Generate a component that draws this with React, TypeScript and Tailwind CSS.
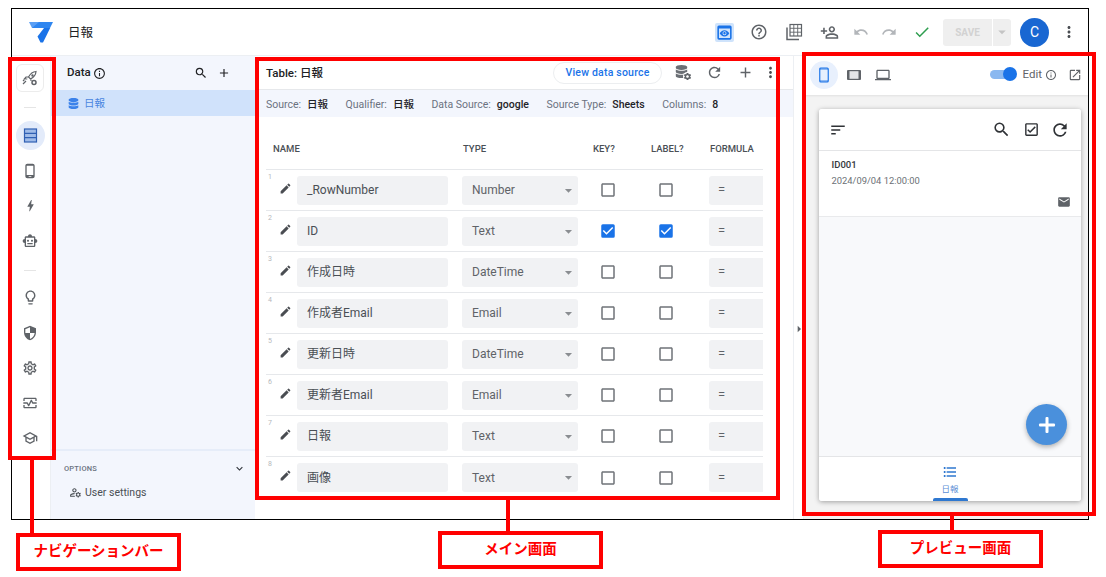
import React from "react";
import { MdOutlinePhoneAndroid, MdBolt, MdOutlineSmartToy, MdOutlineLightbulb, MdOutlineSecurity, MdOutlineSettings, MdOutlineMonitorHeart, MdOutlineSchool, MdOutlineHelpOutline, MdPreview, MdOutlinePersonAddAlt, MdUndo, MdRedo, MdCheck, MdArrowDropDown, MdMoreVert, MdInfoOutline, MdSearch, MdAdd, MdOutlineManageAccounts, MdEdit, MdCheckBoxOutlineBlank, MdCheckBox, MdOutlineLaptop, MdOutlineOpenInNew, MdSort, MdOutlineCheckBox, MdRefresh, MdEmail, MdFormatListBulleted, MdExpandMore, MdArrowRight, MdSettings } from "react-icons/md";
import { FaDatabase } from "react-icons/fa";

const rows = [
  ["_RowNumber", "Number", false, false],
  ["ID", "Text", true, true],
  ["作成日時", "DateTime", false, false],
  ["作成者Email", "Email", false, false],
  ["更新日時", "DateTime", false, false],
  ["更新者Email", "Email", false, false],
  ["日報", "Text", false, false],
  ["画像", "Text", false, false],
] as const;

function Check({ on }: { on: boolean }) {
  return on ? <MdCheckBox className="text-[#1a73e8]" size={18} /> : <MdCheckBoxOutlineBlank className="text-[#6f7378]" size={18} />;
}

function Meta({ k, v }: { k: string; v: string }) {
  return (
    <span className="flex items-center gap-[6px]">
      <span className="text-[#6b7280]">{k}</span>
      <span className="font-medium text-[#1f2328]">{v}</span>
    </span>
  );
}

function NavIcon({ children, active }: { children: React.ReactNode; active?: boolean }) {
  return (
    <div className="flex h-[35px] items-center justify-center text-[#5f6368]">
      {active ? <div className="flex h-[29px] w-[29px] items-center justify-center rounded-full bg-[#e3ebfa] text-[#2f5fb3]">{children}</div> : children}
    </div>
  );
}

function RocketGear() {
  return (
    <svg width="16" height="16" viewBox="0 0 16 16" fill="none" stroke="#5f6368" strokeWidth="1.2">
      <path d="M14 1.500c-3.500.2-5.500 1.800-7.500 5.500l2 2c3.700-2 5.300-4 5.500-7.500z" />
      <path d="M6.500 7H4L2.500 8.800 5.300 9M9 9.500V11" />
      <path d="M1 14l3-3M1 11l1.500-1.500" />
      <circle cx="12" cy="12.500" r="2" strokeWidth="1.500" />
      <circle cx="10.500" cy="5.500" r=".6" fill="#5f6368" />
    </svg>
  );
}

function TableRows() {
  return (
    <svg width="15" height="15" viewBox="0 0 15 15">
      <rect x="1.500" y="1" width="12" height="13" fill="#9fbbe8" stroke="#2f5fb3" strokeWidth="1.200" />
      <path d="M1.500 5.300h12M1.500 9.700h12" stroke="#2f5fb3" strokeWidth="1.300" />
    </svg>
  );
}

function LibraryGrid() {
  return (
    <svg width="18" height="18" viewBox="0 0 18 18" fill="none" stroke="#5f6368" strokeWidth="1.200">
      <rect x="5" y="1.500" width="11.500" height="11.500" />
      <path d="M8.800 1.500v11.500M12.700 1.500v11.500M5 5.300h11.500M5 9.200h11.500" strokeWidth=".9" />
      <path d="M2 4.500v12h12" strokeWidth="1.500" />
    </svg>
  );
}

function Phone() {
  return (
    <svg width="16" height="16" viewBox="0 0 16 16">
      <rect x="3.800" y="1" width="8.400" height="14" rx="1" fill="#8db8f2" stroke="#1a73e8" strokeWidth="1.200" />
      <rect x="4.500" y="3" width="7" height="10" fill="#e8f0fd" />
    </svg>
  );
}

function Tablet() {
  return (
    <svg width="16" height="16" viewBox="0 0 16 16">
      <rect x="1" y="3" width="14" height="10" rx="1" fill="#5f6368" />
      <rect x="3.500" y="4.200" width="9" height="7.600" fill="#e4e5e7" />
    </svg>
  );
}

function Plus() {
  return (
    <svg width="18" height="18" viewBox="0 0 18 18" fill="#ffffff">
      <rect x="7.500" y="1" width="3" height="16" rx="1" />
      <rect x="1" y="7.500" width="16" height="3" rx="1" />
    </svg>
  );
}

export default function App() {
  return (
    <div className="relative h-[577px] w-[1106px] overflow-hidden bg-white pt-[8px] pl-[11px] font-['Roboto','Noto_Sans_CJK_JP',sans-serif] text-[#3c4043]">
      <div className="flex h-[512px] w-[1078px] flex-col overflow-hidden border border-black">
        {/* Header */}
        <header className="flex h-[47px] shrink-0 items-center border-b border-[#eceff3] pl-[17px] pr-[10px]">
          <svg width="24" height="21" viewBox="0 0 24 21" className="mr-[15px]">
            <path d="M0 0h12l3 6H3z" fill="#5a9ff5" />
            <path d="M10 0h14l-3 6H3z" fill="#2f86f0" />
            <path d="M15 6h6.200L14 20.500h-2.500L8.500 14.500z" fill="#1a73e8" />
          </svg>
          <span className="pt-[2px] text-[12.500px] text-[#202124]">日報</span>
          <div className="ml-auto flex items-center text-[#5f6368]">
            <MdPreview size={19} className="mr-[16px] rounded-[2px] bg-[#cfe3fb] text-[#1a73e8]" />
            <MdOutlineHelpOutline size={18} className="mr-[17px]" />
            <LibraryGrid />
            <MdOutlinePersonAddAlt size={19} className="ml-[17px] mr-[14px] -scale-x-100" />
            <MdUndo size={16} className="mr-[12px] text-[#b3b6ba]" />
            <MdRedo size={16} className="mr-[16px] text-[#b3b6ba]" />
            <MdCheck size={18} className="mr-[12px] text-[#2e9e4f]" />
            <div className="mr-[9px] flex h-[27px] w-[68px] items-center rounded-[3px] bg-[#efefef] text-[10px] font-bold text-[#d2d2d2]">
              <span className="flex h-full w-[50px] items-center justify-center border-r border-white">SAVE</span>
              <MdArrowDropDown size={18} className="text-[#c4c4c4]" />
            </div>
            <div className="mr-[11px] flex h-[29px] w-[29px] items-center justify-center rounded-full bg-[#1967d2] text-[14px] text-white">C</div>
            <MdMoreVert size={18} className="text-[#4a4d52]" />
          </div>
        </header>

        <div className="flex min-h-0 flex-1">
          {/* Nav */}
          <nav className="flex w-[39px] shrink-0 flex-col items-center border-r border-[#eceff3] pr-[2px] pt-[8px]">
            <div className="flex h-[28px] w-[28px] items-center justify-center rounded-[6px] border border-[#ececec]"><RocketGear /></div>
            <div className="mt-[15px] mb-[10px] h-px w-[12px] bg-[#e5e5e5]" />
            <NavIcon active><TableRows /></NavIcon>
            <NavIcon><MdOutlinePhoneAndroid size={16} /></NavIcon>
            <NavIcon><MdBolt size={15} /></NavIcon>
            <NavIcon><MdOutlineSmartToy size={16} /></NavIcon>
            <div className="mt-[12px] mb-[9px] h-px w-[12px] bg-[#e5e5e5]" />
            <NavIcon><MdOutlineLightbulb size={17} /></NavIcon>
            <NavIcon><MdOutlineSecurity size={16} /></NavIcon>
            <NavIcon><MdOutlineSettings size={16} /></NavIcon>
            <NavIcon><MdOutlineMonitorHeart size={16} /></NavIcon>
            <NavIcon><MdOutlineSchool size={16} /></NavIcon>
          </nav>

          {/* Data panel */}
          <aside className="flex w-[204px] shrink-0 flex-col bg-[#f3f6fd]">
            <div className="flex h-[34px] items-center pl-[16px] pr-[24px] text-[11.500px] font-medium text-[#202124]">
              <span>Data</span>
              <MdInfoOutline size={13} className="ml-[2px]" />
              <MdSearch size={14} className="ml-auto mr-[9px]" />
              <MdAdd size={14} />
            </div>
            <div className="flex h-[26px] items-center gap-[5px] bg-[#d0e2fb] pl-[17px] pt-[1px] text-[10.500px] text-[#4a86e0]">
              <FaDatabase size={11} className="text-[#3b82ea]" />
              <span>日報</span>
            </div>
            <div className="mt-auto h-[70px] border-t-2 border-[#e6edf9] pl-[13px] pr-[9px] pt-[11px]">
              <div className="flex items-center justify-between text-[7.500px] font-medium tracking-[0.2px] text-[#6b7280]">
                <span>OPTIONS</span>
                <MdExpandMore size={13} className="text-[#30343a]" />
              </div>
              <div className="mt-[10px] flex items-center gap-[3px] pl-[5px] text-[10.500px] text-[#4a4f55]">
                <MdOutlineManageAccounts size={13} />
                <span>User settings</span>
              </div>
            </div>
          </aside>

          {/* Main */}
          <main className="flex w-[539px] shrink-0 flex-col border-r border-[#eceff3]">
            <div className="flex h-[34px] shrink-0 items-center border-b border-[#e6e8eb] pl-[11px] pr-[14px]">
              <span className="pt-[3px] text-[11.500px] font-medium text-[#202124]">Table: 日報</span>
              <div className="ml-auto flex items-center text-[#5f6368]">
                <span className="mr-[13px] flex h-[22px] w-[109px] items-center justify-center rounded-full border border-[#eceef0] text-[10.500px] font-medium tracking-[0.2px] text-[#1a73e8]">View data source</span>
                <div className="relative mr-[16px] h-[15px] w-[15px]">
                  <FaDatabase size={13} className="text-[#6b6f75]" />
                  <MdSettings size={9} className="absolute -bottom-[1px] -right-[2px] rounded-full bg-white text-[#5f6368]" />
                </div>
                <MdRefresh size={17} className="mr-[14px]" />
                <MdAdd size={17} className="mr-[8px]" />
                <MdMoreVert size={17} className="text-[#4a4d52]" />
              </div>
            </div>
            <div className="flex h-[27px] shrink-0 items-center gap-[17.500px] bg-[#f3f6fd] pl-[11px] pt-[3px] text-[10.500px]">
              <Meta k="Source:" v="日報" />
              <Meta k="Qualifier:" v="日報" />
              <Meta k="Data Source:" v="google" />
              <Meta k="Source Type:" v="Sheets" />
              <Meta k="Columns:" v="8" />
            </div>
            <div className="ml-[11px] w-[497px] overflow-hidden">
              <div className="flex h-[53px] items-center border-b border-[#e6e8eb] pt-[12px] text-[9.500px] font-medium text-[#4a4f55]">
                <span className="ml-[7px] w-[190px]">NAME</span>
                <span className="w-[130px]">TYPE</span>
                <span className="w-[58px]">KEY?</span>
                <span className="w-[59px]">LABEL?</span>
                <span>FORMULA</span>
              </div>
              {rows.map(([name, type, key, label], i) => (
                <div key={name} className="relative flex h-[41px] items-center border-b border-[#e6e8eb] last:border-b-0">
                  <span className="absolute left-[2px] top-[2px] text-[7px] text-[#b5b8bc]">{i + 1}</span>
                  <MdEdit size={13} className="ml-[13px] mb-[4px] text-[#4a4d52]" />
                  <div className="ml-[5px] flex h-[29px] w-[151px] items-center rounded-[3px] bg-[#f1f2f4] pl-[10px] text-[12px] text-[#4a4f55]">{name}</div>
                  <div className="ml-[14px] flex h-[29px] w-[116px] items-center justify-between rounded-[3px] bg-[#f1f2f4] pl-[10px] pr-[1px] text-[12px] text-[#5f6368]">
                    {type}
                    <MdArrowDropDown size={17} className="text-[#8a8d91]" />
                  </div>
                  <div className="ml-[21px] flex w-[18px] justify-center"><Check on={key} /></div>
                  <div className="ml-[40px] flex w-[18px] justify-center"><Check on={label} /></div>
                  <div className="ml-[34px] flex h-[29px] w-[54px] shrink-0 items-center rounded-l-[3px] bg-[#f1f2f4] pl-[9px] text-[13px] text-[#5f6368]">=</div>
                </div>
              ))}
            </div>
          </main>

          {/* Splitter */}
          <div className="flex w-[10px] shrink-0 items-center justify-center border-r border-[#eceff3] pt-[82px] text-[#5f6368]">
            <MdArrowRight size={16} className="shrink-0" />
          </div>

          {/* Preview */}
          <section className="flex min-w-0 flex-1 flex-col bg-[#f3f3f3]">
            <div className="flex h-[39px] shrink-0 items-center bg-white pb-[2px] pl-[6px] pr-[6px] text-[#5f6368] shadow-[0_1px_2px_rgba(0,0,0,0.08)]">
              <div className="flex h-[28px] w-[28px] items-center justify-center rounded-full bg-[#e8f0fd]"><Phone /></div>
              <div className="ml-[8px]"><Tablet /></div>
              <MdOutlineLaptop size={16} className="ml-[13px]" />
              <div className="relative ml-auto mr-[3px] h-[9px] w-[24px] rounded-full bg-[#8ab8f0]">
                <div className="absolute -top-[3px] -right-[3px] h-[14px] w-[14px] rounded-full bg-[#1a73e8]" />
              </div>
              <span className="ml-[6px] text-[11.500px]">Edit</span>
              <MdInfoOutline size={12} className="ml-[3px]" />
              <MdOutlineOpenInNew size={14} className="ml-[11px]" />
            </div>
            <div className="relative mb-[18px] ml-[15px] mr-[7px] mt-[14px] flex flex-1 flex-col overflow-hidden rounded-[3px] bg-[#f8f9fb] shadow-[0_1px_5px_rgba(0,0,0,0.35)]">
              <div className="flex h-[42px] shrink-0 items-center border-b border-[#e4e5e7] bg-white pl-[10px] pr-[11px] text-[#2f3236]">
                <MdSort size={18} />
                <MdSearch size={19} className="ml-auto" />
                <MdOutlineCheckBox size={17} className="ml-[12px]" />
                <MdRefresh size={20} className="ml-[10px]" />
              </div>
              <div className="relative h-[66px] shrink-0 border-b border-[#e9eaec] bg-white pl-[12.500px] pt-[7px]">
                <div className="text-[9.500px] font-medium text-[#33373c]">ID001</div>
                <div className="mt-[2px] text-[9.400px] text-[#6b6f75]">2024/09/04 12:00:00</div>
                <MdEmail size={14} className="absolute bottom-[7px] right-[10px] text-[#5f6368]" />
              </div>
              <div className="mt-auto flex h-[45px] shrink-0 flex-col items-center border-t border-[#e4e5e7] bg-white pt-[7px] text-[#2f78d0]">
                <MdFormatListBulleted size={16} />
                <span className="mt-[4px] text-[8.500px] leading-[10px] text-[#5c8fd6]">日報</span>
                <div className="mt-auto h-[3px] w-[35px] rounded-t-[2px] bg-[#2f78d0]" />
              </div>
              <div className="absolute bottom-[56px] right-[14px] flex h-[41px] w-[41px] items-center justify-center rounded-full bg-[#4a90dc] shadow-[0_2px_5px_rgba(0,0,0,0.3)]">
                <Plus />
              </div>
            </div>
          </section>
        </div>
      </div>

      {/* Annotations */}
      <div className="absolute left-[8px] top-[57px] h-[403px] w-[48px] border-[4px] border-[#ff0000]" />
      <div className="absolute left-[255px] top-[57px] h-[443px] w-[525px] border-[4px] border-[#ff0000]" />
      <div className="absolute left-[802px] top-[52px] h-[464px] w-[294px] border-[4px] border-[#ff0000]" />
      <div className="absolute left-[30px] top-[460px] h-[73px] w-[4px] bg-[#ff0000]" />
      <div className="absolute left-[506px] top-[500px] h-[31px] w-[4px] bg-[#ff0000]" />
      <div className="absolute left-[950px] top-[516px] h-[14px] w-[4px] bg-[#ff0000]" />
      <div className="absolute left-[16px] top-[533px] flex h-[38px] w-[165px] items-center justify-center border-[4px] border-[#ff0000] bg-white text-[14.500px] font-bold text-[#ff0000]">ナビゲーションバー</div>
      <div className="absolute left-[438px] top-[531px] flex h-[38px] w-[165px] items-center justify-center border-[4px] border-[#ff0000] bg-white text-[14.500px] font-bold text-[#ff0000]">メイン画面</div>
      <div className="absolute left-[878px] top-[530px] flex h-[38px] w-[165px] items-center justify-center border-[4px] border-[#ff0000] bg-white text-[14.500px] font-bold text-[#ff0000]">プレビュー画面</div>
    </div>
  );
}
